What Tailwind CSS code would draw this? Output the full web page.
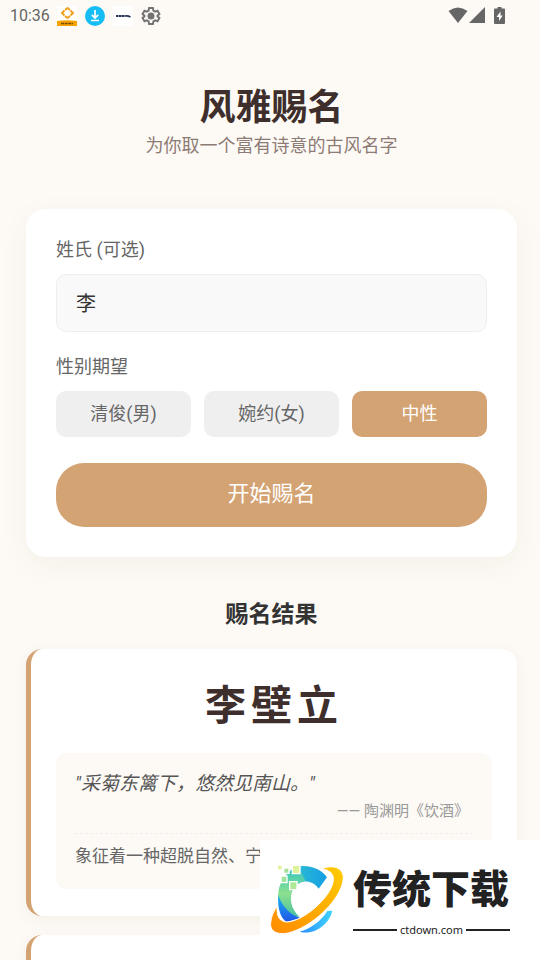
<!DOCTYPE html>
<html lang="zh-CN">
<head>
  <meta charset="UTF-8">
  <meta name="viewport" content="width=device-width, initial-scale=1.0">
  <title>风雅赐名</title>
  <script src="https://cdn.jsdelivr.net/npm/@tailwindcss/browser@4"></script>
</head>
<body class="h-screen overflow-hidden bg-[#fdfaf5] font-[Roboto,'Noto_Sans_CJK_SC',sans-serif] text-[#333]">

  <!-- Status bar -->
  <div class="flex h-8 items-center pl-[10px] pr-[35px] text-[#666]">
    <span class="text-base">10:36</span>
    <div class="ml-[7px] flex items-center gap-2">
      <svg class="size-5" viewBox="0 0 20 20">
        <rect width="20" height="20" fill="#fff"/>
        <path d="M8 4 10.500 2 13 4M13.500 4.500 16 7l-2.500 2.500M13 10l-2.500 2L8 10M7.500 9.500 5 7l2.500-2.500" fill="none" stroke="#f0a020" stroke-width="2"/>
        <path d="M0 15q10-1.500 20 0v5H0z" fill="#f5a300"/>
        <path d="M4 17.500h12" stroke="#7a4a00" stroke-width="1.500" stroke-dasharray="3 .6"/>
      </svg>
      <svg class="size-5" viewBox="0 0 20 20">
        <circle cx="10" cy="10" r="10" fill="#16bdf5"/>
        <path d="M10 4v8M6.800 8.800l3.200 3.200 3.200-3.200M6 14.500h8" fill="none" stroke="#fff" stroke-width="1.700"/>
      </svg>
      <svg class="size-5" viewBox="0 0 20 20">
        <rect width="20" height="20" fill="#fff"/>
        <path d="M3 10h9" stroke="#27345c" stroke-width="2" stroke-dasharray="2.400 .4"/>
        <path d="M12 10q3-.5 5.500 1" fill="none" stroke="#27345c" stroke-width="1.500"/>
      </svg>
      <svg class="size-5" viewBox="0 0 24 24" fill="none" stroke="#737373" stroke-width="2.400">
        <path d="M9.700 2.500h4.600l.6 3 2 1.200 2.900-1 2.300 4-2.300 2v.6l2.300 2-2.300 4-2.900-1-2 1.200-.6 3H9.700l-.6-3-2-1.200-2.900 1-2.300-4 2.300-2v-.6l-2.300-2 2.300-4 2.900 1 2-1.200z"/>
        <circle cx="12" cy="12" r="3" fill="#737373"/>
      </svg>
    </div>
    <div class="ml-auto flex items-center pb-[2px]">
      <svg class="h-4 w-5" viewBox="0 0 20 16" fill="#666"><path d="M.5 4Q10-3 19.500 4L10 16z"/></svg>
      <svg class="ml-px h-4 w-4" viewBox="0 0 16 16" fill="#666"><path d="M16 0v16H0z"/></svg>
      <svg class="ml-[9px] h-[17px] w-[11px]" viewBox="0 0 11 17">
        <path d="M3.500 0h4v1.500H10q1 0 1 1V16q0 1-1 1H1q-1 0-1-1V2.500q0-1 1-1h2.500z" fill="#666"/>
        <path d="M6.500 4.500 2.500 10H5v4l3.700-5.500H6.500z" fill="#fff"/>
      </svg>
    </div>
  </div>

  <main class="pl-[26px] pr-[23px]">
    <header class="pt-[52px] text-center">
      <h1 class="text-4xl/[48px] font-bold text-[#3e2f2c]">风雅赐名</h1>
      <p class="text-lg/[28px] text-[#8d7b76]">为你取一个富有诗意的古风名字</p>
    </header>

    <!-- Name form -->
    <form class="mt-[49px] rounded-[20px] bg-white px-[30px] pt-[27px] pb-[30px] shadow-[0_8px_30px_rgba(80,50,20,0.05)]">
      <label for="surname" class="block text-lg/[28px] text-[#666]">姓氏 (可选)</label>
      <input id="surname" type="text" value="李" class="mt-[10px] h-[58px] w-full rounded-[10px] border border-[#eee] bg-[#f9f9f9] px-[19px] pb-[2px] text-xl text-[#333] outline-none">

      <fieldset class="mt-[21px]">
        <legend class="block text-lg/[28px] text-[#666]">性别期望</legend>
        <div class="mt-[10px] grid grid-cols-3 gap-[13px] text-lg/[28px]">
          <button type="button" class="h-[46px] rounded-[10px] bg-[#efefef] text-[#666]">清俊(男)</button>
          <button type="button" class="h-[46px] rounded-[10px] bg-[#efefef] text-[#666]">婉约(女)</button>
          <button type="button" class="h-[46px] rounded-[10px] bg-[#d4a373] text-white" aria-pressed="true">中性</button>
        </div>
      </fieldset>

      <button type="submit" class="mt-[26px] h-16 w-full rounded-[28px] bg-[#d4a373] pb-1 text-[22px] text-white">开始赐名</button>
    </form>

    <!-- Results -->
    <section>
      <h2 class="mt-[42px] text-center text-[23px]/[32px] font-bold">赐名结果</h2>

      <article class="mt-[18px] rounded-[16px] border-l-[5px] border-[#d4a373] bg-white px-[25px] pt-[27px] pb-[27px] shadow-[0_4px_16px_rgba(80,50,20,0.05)]">
        <h3 class="text-center text-[41px]/[60px] font-bold tracking-[5px] text-[#3e2f2c]">李壁立</h3>
        <div class="mt-[17px] h-[136px] rounded-[10px] bg-[#fdfaf5] px-[19px] pt-[17px]">
          <p class="text-[19px]/[28px] text-[#555] italic">"采菊东篱下，悠然见南山。"</p>
          <p class="pr-1 text-right text-[15px]/[26px] text-[#999]">—— 陶渊明《饮酒》</p>
          <p class="mt-[9px] overflow-hidden border-t border-dashed border-[#eee] pt-2 text-[17px]/[28px] whitespace-nowrap text-[#666]">象征着一种超脱自然、宁静致远</p>
        </div>
      </article>

      <article class="mt-[19px] h-32 rounded-[16px] border-l-[5px] border-[#d4a373] bg-white shadow-[0_4px_16px_rgba(80,50,20,0.05)]"></article>
    </section>
  </main>

  <!-- Site badge -->
  <aside class="fixed right-0 bottom-0 flex h-[120px] w-[280px] items-center bg-white pl-[7px]">
    <svg class="size-20 shrink-0" viewBox="20 60 240 240">
      <defs>
        <linearGradient id="ring" x1="0" y1="1" x2="1" y2="0"><stop stop-color="#ff8a00"/><stop offset="1" stop-color="#ffcc00"/></linearGradient>
        <linearGradient id="arc"><stop stop-color="#35c7cb"/><stop offset="1" stop-color="#159ee5"/></linearGradient>
        <linearGradient id="leaf" x1="0" y1="0" x2="0" y2="1"><stop stop-color="#38c6bd"/><stop offset=".5" stop-color="#8be08e"/><stop offset="1" stop-color="#48bfa0"/></linearGradient>
        <linearGradient id="deep" x1="0" y1="0" x2="0" y2="1"><stop stop-color="#19b5ee"/><stop offset="1" stop-color="#2054e8"/></linearGradient>
        <linearGradient id="tail"><stop stop-color="#2b8cff"/><stop offset="1" stop-color="#3fd4ff"/></linearGradient>
      </defs>
      <path d="M110 80C145 73 182 86 200 112L175 146C155 117 117 118 100 145L72 120Q85 92 110 80Z" fill="url(#arc)"/>
      <path d="M95 88C65 110 50 145 54 178C65 210 90 227 118 232C92 208 84 172 100 145Q112 124 135 123L120 90Z" fill="url(#leaf)"/>
      <path d="M54 165C51 205 60 232 78 246L120 234C90 224 66 202 54 165Z" fill="url(#deep)"/>
      <path d="M118 275C150 267 183 243 201 213L216 212C209 248 165 288 118 275Z" fill="url(#tail)"/>
      <path d="M183 86C215 74 248 80 249 112C248 165 180 240 110 270C60 292 28 278 31 250C32 230 40 212 51 199C48 225 55 245 80 246C130 244 215 170 219 120C220 100 208 90 183 86Z" fill="url(#ring)" stroke="#fff" stroke-width="3"/>
      <g stroke="#fff" stroke-width="4">
        <path d="M51 75h15v15H51z" fill="#e3f29a"/>
        <path d="M70 84h16v16H70z" fill="#a5e39b"/>
        <path d="M96 76h23v25H96z" fill="#def29b"/>
        <path d="M62 108h18v20H62z" fill="#9fe39c"/>
        <path d="M88 125h22v24H88z" fill="#aee996"/>
      </g>
    </svg>
    <div class="ml-[6px] w-[157px] pt-1 text-[#222]">
      <div class="text-[39px]/[48px] font-black whitespace-nowrap">传统下载</div>
      <div class="mt-2 flex items-center gap-[3px] font-['Noto_Sans',sans-serif] text-[11px]/[16px]">
        <span class="h-[2px] flex-1 bg-[#222]"></span>
        ctdown.com
        <span class="h-[2px] flex-1 bg-[#222]"></span>
      </div>
    </div>
  </aside>
</body>
</html>
